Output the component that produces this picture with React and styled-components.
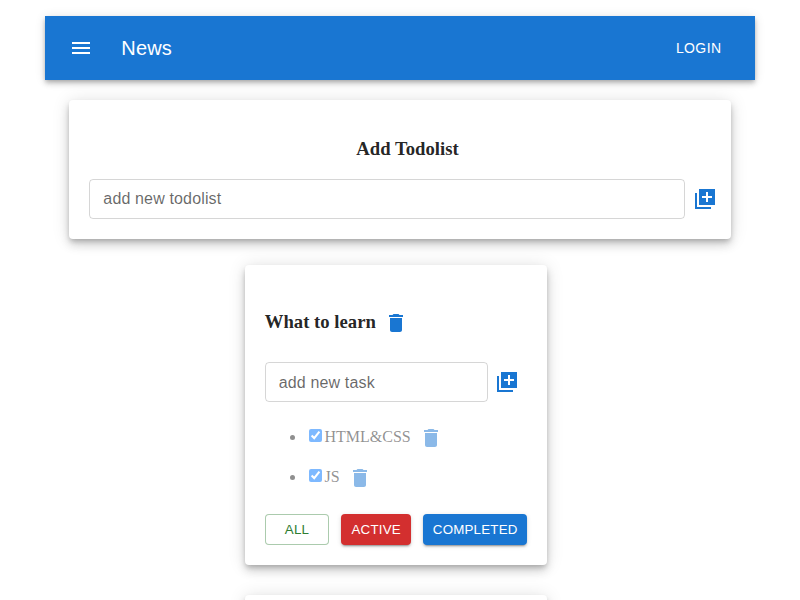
import React from "react";
import styled, { createGlobalStyle } from "styled-components";

const GlobalStyle = createGlobalStyle`
  html { overflow: hidden; }
  body { margin: 0; background: #fff; color: rgba(0, 0, 0, 0.87); }
  *, *::before, *::after { box-sizing: border-box; }
`;

const Page = styled.div`
  height: 600px;
  overflow: hidden;
  padding: 16px 45.33px 0;
`;

const AppBar = styled.header`
  position: relative;
  display: flex;
  align-items: center;
  height: 64px;
  padding: 0 24px;
  background: #1976d2;
  color: #fff;
  font-family: "Liberation Sans", Arial, sans-serif;
  box-shadow: 0 2px 4px -1px rgba(0, 0, 0, 0.2), 0 4px 5px rgba(0, 0, 0, 0.14),
    0 1px 10px rgba(0, 0, 0, 0.12);
`;

const BarTitle = styled.div`
  flex: 1;
  margin-left: 28px;
  font-size: 20px;
  line-height: 32px;
  letter-spacing: 0.15px;
`;

const LoginButton = styled.button`
  width: 64px;
  height: 36px;
  padding: 0;
  border: 0;
  background: none;
  color: inherit;
  font: 14px/24px "Liberation Sans", Arial, sans-serif;
  letter-spacing: 0.4px;
`;

const Icon = styled.svg`
  display: block;
  flex: none;
  width: 24px;
  height: 24px;
  fill: currentColor;
`;

const IconButton = styled.button`
  display: flex;
  flex: none;
  padding: 0;
  border: 0;
  background: none;
  color: #1976d2;
  margin-left: ${(p) => p.$gap || 0}px;
`;

const Paper = styled.section`
  border-radius: 4px;
  background: #fff;
  box-shadow: 0 3px 5px -1px rgba(0, 0, 0, 0.2), 0 6px 10px rgba(0, 0, 0, 0.14),
    0 1px 18px rgba(0, 0, 0, 0.12);
`;

const AddPaper = styled(Paper)`
  height: 138.7px;
  margin: 20px 24px 0;
  padding: 38px 14px 0 20px;
`;

const ListPaper = styled(Paper)`
  width: 302.6px;
  height: 299.8px;
  margin: ${(p) => p.$top}px 0 0 199.4px;
  padding: 45px 20px 0;
`;

const Heading = styled.h3`
  margin: 0;
  font: bold 18.72px/22px "Liberation Serif", "Times New Roman", serif;
`;

const CenteredHeading = styled(Heading)`
  text-align: center;
  padding-left: 9px;
`;

const HeadingRow = styled.div`
  display: flex;
  align-items: center;
  height: 26px;
  ${Heading} { padding-bottom: 2px; }
`;

const FieldRow = styled.div`
  display: flex;
  align-items: center;
  margin-top: ${(p) => p.$top}px;
`;

const Field = styled.input`
  width: ${(p) => p.$width}px;
  height: 40px;
  padding: ${(p) => p.$shift || 0}px 13px 0;
  border: 1px solid rgba(0, 0, 0, 0.16);
  border-radius: 4px;
  outline: 0;
  background: transparent;
  font: 16px/23px "Liberation Sans", Arial, sans-serif;
  letter-spacing: 0.15px;
  &::placeholder { color: rgba(0, 0, 0, 0.6); opacity: 1; }
`;

const Tasks = styled.ul`
  margin: 16px 0 0;
  padding: 0 0 0 25px;
  list-style: none;
`;

const Task = styled.li`
  display: flex;
  align-items: center;
  height: 40px;
  opacity: 0.5;
  font: 16px/18px "Liberation Serif", "Times New Roman", serif;
  &::before {
    content: "";
    width: 5px;
    height: 5px;
    margin: 0 10px 1px 0;
    border-radius: 50%;
    background: rgba(0, 0, 0, 0.87);
  }
`;

const TaskName = styled.span`
  padding-bottom: 2px;
`;

const Check = styled.input`
  width: 13px;
  height: 13px;
  margin: 0 2.6px 5px 4.2px;
`;

const Filters = styled.div`
  display: flex;
  gap: 12.2px;
  margin-top: 16.2px;
`;

const tones = {
  outline: "background: #fff; color: #2e7d32; border: 1px solid rgba(46, 125, 50, 0.4);",
  red: "background: #d32f2f; color: #fff; border: 0;",
  blue: "background: #1976d2; color: #fff; border: 0;",
};

const FilterButton = styled.button`
  width: ${(p) => p.$width}px;
  height: 30.7px;
  padding: 0;
  border-radius: 4px;
  font: 13.33px/24px "Liberation Sans", Arial, sans-serif;
  letter-spacing: 0.2px;
  ${(p) => tones[p.$tone]}
  box-shadow: ${(p) =>
    p.$tone === "outline"
      ? "none"
      : "0 3px 1px -2px rgba(0,0,0,.2), 0 2px 2px rgba(0,0,0,.14), 0 1px 5px rgba(0,0,0,.12)"};
`;

const Menu = () => (
  <Icon viewBox="0 0 24 24"><path d="M3 18h18v-2H3v2zm0-5h18v-2H3v2zm0-7v2h18V6H3z" /></Icon>
);
const Trash = () => (
  <Icon viewBox="0 0 24 24"><path d="M6 19c0 1.1.9 2 2 2h8c1.1 0 2-.9 2-2V7H6v12zM19 4h-3.5l-1-1h-5l-1 1H5v2h14V4z" /></Icon>
);
const AddBox = () => (
  <Icon viewBox="0 0 24 24"><path d="M4 6H2v16h16v-2H4V6zm18-4H6v16h16V2zm-3 9h-4v4h-2v-4H9V9h4V5h2v4h4v2z" /></Icon>
);

const tasks = ["HTML&CSS", "JS"];

export default function App() {
  return (
    <>
      <GlobalStyle />
      <Page>
        <AppBar>
          <Menu />
          <BarTitle>News</BarTitle>
          <LoginButton>LOGIN</LoginButton>
        </AppBar>
        <AddPaper>
          <CenteredHeading>Add Todolist</CenteredHeading>
          <FieldRow $top={18.7}>
            <Field $width={596} placeholder="add new todolist" />
            <IconButton $gap={7.4} aria-label="Add list"><AddBox /></IconButton>
          </FieldRow>
        </AddPaper>
        <ListPaper $top={26.2}>
          <HeadingRow>
            <Heading>What to learn</Heading>
            <IconButton $gap={8} aria-label="Delete list"><Trash /></IconButton>
          </HeadingRow>
          <FieldRow $top={26.3}>
            <Field $width={223} $shift={2} placeholder="add new task" />
            <IconButton $gap={7.4} aria-label="Add task"><AddBox /></IconButton>
          </FieldRow>
          <Tasks>
            {tasks.map((task) => (
              <Task key={task}>
                <Check type="checkbox" defaultChecked />
                <TaskName>{task}</TaskName>
                <IconButton $gap={8} aria-label="Delete task"><Trash /></IconButton>
              </Task>
            ))}
          </Tasks>
          <Filters>
            <FilterButton $tone="outline" $width={64.6}>ALL</FilterButton>
            <FilterButton $tone="red" $width={69.5}>ACTIVE</FilterButton>
            <FilterButton $tone="blue" $width={104.3}>COMPLETED</FilterButton>
          </Filters>
        </ListPaper>
        <ListPaper $top={30} />
      </Page>
    </>
  );
}
